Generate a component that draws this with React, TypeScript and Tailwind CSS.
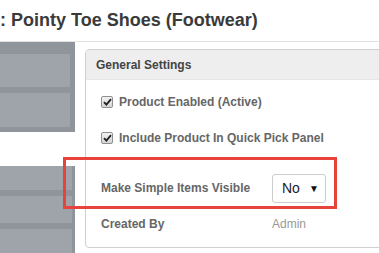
import React from 'react';

function CheckBox() {
  return (
    <span className="flex h-[12px] w-[12px] items-center justify-center rounded-[2px] border border-[#8f8f8f] bg-gradient-to-b from-[#f2f2f2] to-[#d4d4d4]">
      <svg width="9" height="8" viewBox="0 0 9 8">
        <path d="M1 4.2 L3.4 6.6 L8 1.2" fill="none" stroke="#222" strokeWidth="1.8" />
      </svg>
    </span>
  );
}

export default function App() {
  return (
    <div className="relative h-[253px] w-[379px] overflow-hidden bg-white font-['Liberation_Sans',Arial,sans-serif]">
      <div className="h-[42px] border-b border-[#e3e3e3] pt-[10px] text-[18px] font-bold leading-[21px] text-[#3a3a3a]">
        : Pointy Toe Shoes (Footwear)
      </div>

      <div className="flex">
        <div className="flex w-[75px] shrink-0 flex-col">
          <div className="flex h-[90px] flex-col gap-[6px] bg-[#90959b] pr-[5px] pt-[12px]">
            <div className="h-[33px] bg-[#9fa4aa]" />
            <div className="h-[34px] bg-[#9fa4aa]" />
          </div>
          <div className="h-[34px]" />
          <div className="flex h-[90px] flex-col gap-[6px] bg-[#90959b] pr-[3px]">
            <div className="h-[27px] bg-[#9fa4aa]" />
            <div className="h-[30px] bg-[#9fa4aa]" />
            <div className="h-[30px] bg-[#9fa4aa]" />
          </div>
        </div>

        <div className="pl-[10px] pt-[7px]">
          <div className="h-[199px] w-[310px] overflow-hidden rounded-[4px] border border-[#cfcfcf]">
            <div className="flex h-[30px] items-center border-b border-[#e6e6e6] bg-[#eeeeee] pl-[10px] text-[12px] font-bold text-[#444]">
              General Settings
            </div>
            <div className="flex flex-col pl-[15px] pt-[7px] text-[12px] font-bold text-[#666]">
              <div className="flex h-[30px] items-center gap-[6px]">
                <CheckBox />
                <span>Product Enabled (Active)</span>
              </div>
              <div className="mt-[6px] flex h-[30px] items-center gap-[6px]">
                <CheckBox />
                <span>Include Product In Quick Pick Panel</span>
              </div>
              <div className="mt-[20px] flex h-[30px] items-center">
                <span className="w-[171px]">Make Simple Items Visible</span>
                <div className="flex h-[29px] w-[54px] items-center justify-between rounded-[3px] border border-[#cccccc] pl-[9px] pr-[6px] font-normal">
                  <span className="text-[14px] text-[#1a1a2a]">No</span>
                  <span className="text-[10px] text-[#111]">▼</span>
                </div>
              </div>
              <div className="mt-[6px] flex h-[30px] items-center">
                <span className="w-[171px]">Created By</span>
                <span className="font-normal text-[#999]">Admin</span>
              </div>
            </div>
          </div>
        </div>
      </div>

      <div className="absolute left-[63px] top-[157px] h-[52px] w-[274px] border-[3px] border-[#e8423c]" />
    </div>
  );
}
